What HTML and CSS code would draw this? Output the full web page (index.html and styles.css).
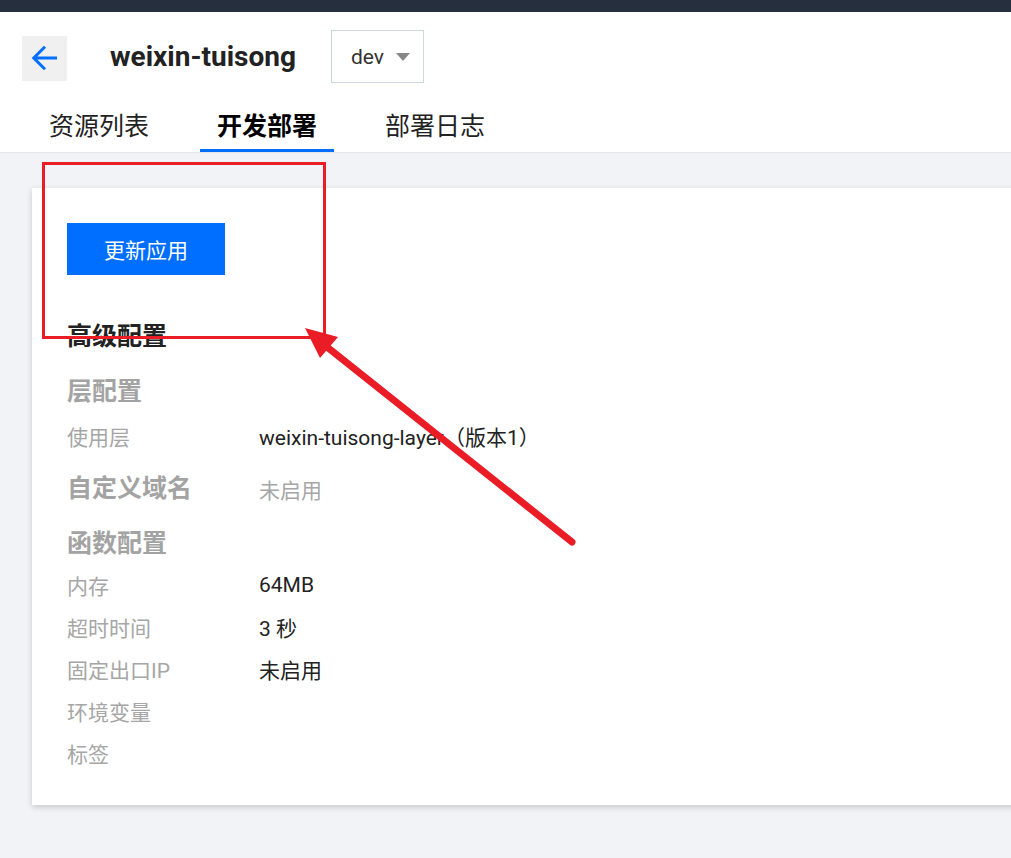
FILE: index.html
```html
<!DOCTYPE html>
<html lang="zh-CN">
<head>
<meta charset="utf-8">
<title>weixin-tuisong</title>
<link rel="stylesheet" href="styles.css">
</head>
<body>
<div class="page">
  <div class="topbar"></div>
  <header class="header">
    <div class="title-row">
      <button class="back" aria-label="返回">
        <svg width="36" height="36" viewBox="0 0 24 24"><path d="M20 12H5M12 4.5L4.5 12 12 19.5" fill="none" stroke="#006eff" stroke-width="2" stroke-linecap="butt" stroke-linejoin="miter"/></svg>
      </button>
      <h1 class="title">weixin-tuisong</h1>
      <div class="select">
        <span class="select-text">dev</span>
        <span class="caret"></span>
      </div>
    </div>
    <nav class="tabs">
      <a class="tab">资源列表</a>
      <a class="tab active">开发部署</a>
      <a class="tab">部署日志</a>
    </nav>
  </header>
  <main class="main">
    <section class="card">
      <button class="btn-primary">更新应用</button>
      <h2 class="sec-title dark">高级配置</h2>
      <h3 class="sec-title">层配置</h3>
      <div class="row"><span class="label">使用层</span><span class="value">weixin-tuisong-layer（版本1）</span></div>
      <div class="row sec-row"><span class="sec-title label-w">自定义域名</span><span class="value muted">未启用</span></div>
      <h3 class="sec-title tight">函数配置</h3>
      <div class="row"><span class="label">内存</span><span class="value">64MB</span></div>
      <div class="row"><span class="label">超时时间</span><span class="value">3 秒</span></div>
      <div class="row"><span class="label">固定出口IP</span><span class="value">未启用</span></div>
      <div class="row"><span class="label">环境变量</span><span class="value"></span></div>
      <div class="row"><span class="label">标签</span><span class="value"></span></div>
    </section>
  </main>
  <svg class="annotation" width="1011" height="858" viewBox="0 0 1011 858">
    <rect x="43.5" y="163.5" width="281" height="174" fill="none" stroke="#ea1c26" stroke-width="3"/>
    <line x1="572" y1="542" x2="322" y2="343" stroke="#ea1c26" stroke-width="7" stroke-linecap="round"/>
    <polygon points="305,328 338,337 320,358" fill="#ea1c26"/>
  </svg>
</div>
</body>
</html>
```

FILE: styles.css
```css
* { box-sizing: border-box; }
html, body { margin: 0; padding: 0; }
body {
  font-family: Roboto, "Noto Sans CJK SC", sans-serif;
  background: #f2f3f7;
  color: #222;
  overflow: hidden;
}
.page {
  position: relative;
  width: 1011px;
  height: 858px;
  overflow: hidden;
}
.topbar {
  height: 12px;
  background: #262f3e;
}
.header {
  background: #fff;
  border-bottom: 1px solid #e3e6eb;
  padding-top: 18px;
}
.title-row {
  display: flex;
  align-items: center;
  height: 53px;
  padding-left: 22px;
}
.back {
  width: 45px;
  height: 45px;
  border: 0;
  padding: 0;
  background: #f0f0f0;
  display: flex;
  align-items: center;
  justify-content: center;
  margin-top: 3px;
}
.title {
  margin: 0 0 0 43px;
  font-size: 28px;
  font-weight: 700;
  color: #222;
  line-height: 34px;
}
.select {
  margin-left: 35px;
  width: 93px;
  height: 53px;
  border: 1px solid #cfd6e0;
  display: flex;
  align-items: center;
  padding-left: 19px;
}
.select-text {
  font-size: 21px;
  color: #333;
}
.caret {
  margin-left: 12px;
  width: 0;
  height: 0;
  border-left: 7px solid transparent;
  border-right: 7px solid transparent;
  border-top: 8px solid #888;
}
.tabs {
  display: flex;
  gap: 34px;
  padding-left: 32px;
}
.tab {
  padding: 28px 17px 6px;
  font-size: 25px;
  line-height: 32px;
  color: #222;
  border-bottom: 3px solid transparent;
}
.tab.active {
  font-weight: 700;
  border-bottom-color: #006eff;
  color: #000;
}
.main {
  padding: 35px 0 0 32px;
}
.card {
  width: 1000px;
  background: #fff;
  box-shadow: 0 2px 6px rgba(0, 0, 0, 0.18);
  padding: 35px 35px 31px;
}
.btn-primary {
  display: block;
  width: 158px;
  height: 52px;
  border: 0;
  background: #006eff;
  color: #fff;
  font-family: inherit;
  font-size: 21px;
  margin-bottom: 39px;
}
.sec-title {
  margin: 9px 0 0;
  font-size: 25px;
  font-weight: 700;
  line-height: 46px;
  color: #a3a3a3;
}
.sec-title.dark { color: #222; }
.sec-title.tight {
  margin-top: 12px;
  line-height: 40px;
}
.row {
  display: flex;
  align-items: center;
  height: 42px;
  font-size: 21px;
}
.row.sec-row {
  height: 46px;
  margin-top: 9px;
}
.sec-row .sec-title { margin: 0; }
.label, .label-w {
  width: 192px;
  flex-shrink: 0;
}
.label { color: #a6a6a6; }
.value { color: #222; }
.value.muted { color: #a6a6a6; }
.annotation {
  position: absolute;
  left: 0;
  top: 0;
  pointer-events: none;
}
```
